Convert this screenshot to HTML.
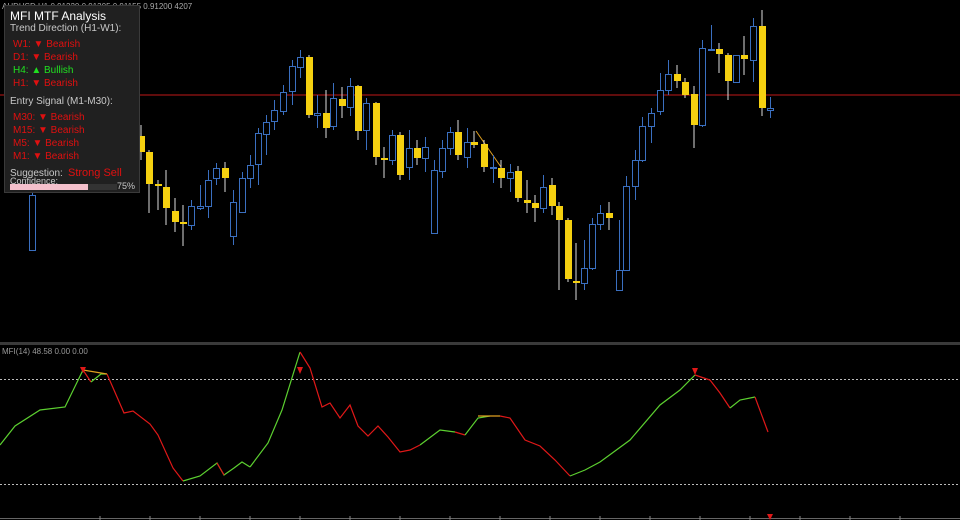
<!DOCTYPE html>
<html><head><meta charset="utf-8"><style>
body{margin:0;background:#000;width:960px;height:520px;overflow:hidden;font-family:"Liberation Sans",sans-serif}
#p{position:absolute;left:4px;top:5px;width:136px;height:188px;background:#202020;border:1px solid #3a3a3a;box-sizing:border-box}
.t{position:absolute;white-space:nowrap}
.r{color:#e01010;font-size:10px}.g{color:#20e020;font-size:10px}.w{color:#c8c8c8;font-size:10px}
</style></head><body>
<svg id="s" width="960" height="520" style="position:absolute;left:0;top:0">
<line x1="0" y1="95" x2="960" y2="95" stroke="#c01818" stroke-width="1"/>
<rect x="0" y="342" width="960" height="3" fill="#3a3a3a"/>
<line x1="0" y1="379.5" x2="960" y2="379.5" stroke="#bbb" stroke-dasharray="2,2"/>
<line x1="0" y1="484.5" x2="960" y2="484.5" stroke="#bbb" stroke-dasharray="2,2"/>
<line x1="0" y1="518.5" x2="960" y2="518.5" stroke="#666"/>
<polyline points="476,131 501,167" stroke="#e0a020" fill="none"/>
<g fill="none" stroke-width="1.2">
<polyline stroke="#5cd030" points="0,445 15,426 40,410 65,407 83,370"/>
<polyline stroke="#e01818" points="83,370 91,382"/>
<polyline stroke="#5cd030" points="91,382 101,374 107,374"/>
<polyline stroke="#e0a020" points="83,370 107,374"/>
<polyline stroke="#e01818" points="107,374 124,413 133,411 150,424 158,435 173,468 183,481"/>
<polyline stroke="#5cd030" points="183,481 200,476 217,463 224,475 234,468 242,462 250,467"/>
<polyline stroke="#e01818" points="217,463 224,475"/>
<polyline stroke="#5cd030" points="250,467 268,443 282,410 300,352"/>
<polyline stroke="#e01818" points="300,352 310,368 322,407 330,403 340,418 350,405 358,426 368,436 378,426 388,437 400,452 410,450 420,445"/>
<polyline stroke="#5cd030" points="420,445 440,430 455,432"/>
<polyline stroke="#e01818" points="455,432 465,435"/>
<polyline stroke="#5cd030" points="465,435 478,418 490,416"/>
<polyline stroke="#e0a020" points="478,416 500,416"/>
<polyline stroke="#e01818" points="500,416 510,418 525,440 540,446 555,460 570,476"/>
<polyline stroke="#5cd030" points="570,476 585,470 600,462 630,440 660,405 680,390 695,375"/>
<polyline stroke="#e01818" points="695,375 710,380 720,393 730,408"/>
<polyline stroke="#5cd030" points="730,408 740,400 755,397"/>
<polyline stroke="#e01818" points="755,397 768,432"/>
</g>
<g fill="#e01818">
<polygon points="80,367 86,367 83,373"/><polygon points="297,367 303,367 300,374"/><polygon points="692,368 698,368 695,375"/><polygon points="767,514 773,514 770,520"/>
</g>
<g id="c"></g>
<g stroke="#888"><line x1="100" y1="516" x2="100" y2="520"/><line x1="150" y1="516" x2="150" y2="520"/><line x1="200" y1="516" x2="200" y2="520"/><line x1="250" y1="516" x2="250" y2="520"/><line x1="300" y1="516" x2="300" y2="520"/><line x1="350" y1="516" x2="350" y2="520"/><line x1="400" y1="516" x2="400" y2="520"/><line x1="450" y1="516" x2="450" y2="520"/><line x1="500" y1="516" x2="500" y2="520"/><line x1="550" y1="516" x2="550" y2="520"/><line x1="600" y1="516" x2="600" y2="520"/><line x1="650" y1="516" x2="650" y2="520"/><line x1="700" y1="516" x2="700" y2="520"/><line x1="750" y1="516" x2="750" y2="520"/><line x1="800" y1="516" x2="800" y2="520"/><line x1="850" y1="516" x2="850" y2="520"/><line x1="900" y1="516" x2="900" y2="520"/></g>
<text x="2" y="354" fill="#999" font-size="8" font-family="Liberation Sans">MFI(14) 48.58 0.00 0.00</text>
<text x="2" y="9" fill="#aaa" font-size="8" font-family="Liberation Sans">AUDUSD,H1 0.91220 0.91305 0.91155 0.91200 4207</text>
</svg>
<div id="p">
<div class="t" style="left:5px;top:3px;color:#fff;font-size:12px">MFI MTF Analysis</div>
<div class="t w" style="left:5px;top:17px">Trend Direction (H1-W1):</div>
<div class="t r" style="left:8px;top:33px">W1: ▼ Bearish</div>
<div class="t r" style="left:8px;top:46px">D1: ▼ Bearish</div>
<div class="t g" style="left:8px;top:59px">H4: ▲ Bullish</div>
<div class="t r" style="left:8px;top:72px">H1: ▼ Bearish</div>
<div class="t w" style="left:5px;top:90px">Entry Signal (M1-M30):</div>
<div class="t r" style="left:8px;top:106px">M30: ▼ Bearish</div>
<div class="t r" style="left:8px;top:119px">M15: ▼ Bearish</div>
<div class="t r" style="left:8px;top:132px">M5: ▼ Bearish</div>
<div class="t r" style="left:8px;top:145px">M1: ▼ Bearish</div>
<div class="t w" style="left:5px;top:162px">Suggestion:</div>
<div class="t r" style="left:63px;top:161px;font-size:11px">Strong Sell</div>
<div class="t w" style="left:5px;top:170px;font-size:9px">Confidence:</div>
<div style="position:absolute;left:5px;top:178px;width:107px;height:6px;background:#333"></div>
<div style="position:absolute;left:5px;top:178px;width:78px;height:6px;background:#f4c0cc"></div>
<div class="t w" style="left:112px;top:175px;font-size:9px">75%</div>
</div>
<script>
var d=[[32,195,250,185,250,0],[141,136,152,125,160,1],[149,152,184,150,213,1],[158,184,186,180,210,1],[166,187,208,170,225,1],[175,211,222,198,232,1],[183,222,224,205,246,1],[191,206,225,200,230,0],[200,206,208,185,210,0],[208,180,206,170,218,0],[216,168,178,163,185,0],[225,168,178,162,192,1],[233,202,236,190,245,0],[242,178,212,172,212,0],[250,165,178,155,188,0],[258,133,164,128,185,0],[266,122,134,115,155,0],[274,110,121,100,130,0],[283,92,111,85,115,0],[292,66,91,60,105,0],[300,57,67,50,78,0],[309,57,115,55,118,1],[317,113,115,95,128,0],[326,113,128,90,138,1],[333,98,126,83,130,0],[342,99,106,87,118,1],[350,86,107,78,116,0],[358,86,131,85,140,1],[366,103,130,98,150,0],[376,103,157,102,165,1],[384,158,160,147,178,1],[392,135,160,130,165,0],[400,135,175,132,180,1],[409,148,167,130,180,0],[417,148,158,140,165,1],[425,147,158,137,172,0],[434,170,233,160,233,0],[442,148,171,140,178,0],[450,132,148,127,155,0],[458,132,155,120,160,1],[467,142,157,128,168,0],[474,142,145,131,148,1],[484,144,167,140,172,1],[493,167,168,155,183,0],[501,168,178,160,188,1],[510,172,178,164,192,0],[518,171,198,166,202,1],[527,200,203,180,213,1],[535,203,208,195,222,1],[543,187,208,175,213,0],[552,185,206,178,215,1],[559,206,220,202,290,1],[568,220,279,218,282,1],[576,281,283,243,300,1],[584,268,283,240,290,0],[592,224,268,218,270,0],[600,213,224,205,230,0],[609,213,218,202,230,1],[619,270,290,220,290,0],[626,186,270,176,270,0],[635,160,186,150,200,0],[642,126,160,117,162,0],[651,113,126,108,143,0],[660,90,111,73,115,0],[668,74,90,60,95,0],[677,74,81,65,88,1],[685,82,95,78,98,1],[694,94,125,86,148,1],[702,48,125,40,127,0],[711,49,50,25,50,0],[719,49,54,43,73,1],[728,55,81,53,100,1],[736,55,82,55,83,0],[744,55,59,36,75,1],[753,26,60,18,82,0],[762,26,108,10,116,1],[770,108,110,97,118,0]];
var h='';d.forEach(function(c){var x=c[0],t=c[1],b=c[2];
if(c[5]){h+='<line x1="'+x+'" y1="'+c[3]+'" x2="'+x+'" y2="'+c[4]+'" stroke="#ddd"/><rect x="'+(x-3)+'" y="'+t+'" width="7" height="'+Math.max(2,b-t)+'" fill="#f5d010"/>';}
else{h+='<line x1="'+(x+.5)+'" y1="'+c[3]+'" x2="'+(x+.5)+'" y2="'+c[4]+'" stroke="#3a6fc0"/><rect x="'+(x-2.5)+'" y="'+(t+.5)+'" width="6" height="'+Math.max(1,b-t)+'" fill="#000" stroke="#3a6fc0"/>';}});
document.getElementById('c').innerHTML=h;
</script>
</body></html>
